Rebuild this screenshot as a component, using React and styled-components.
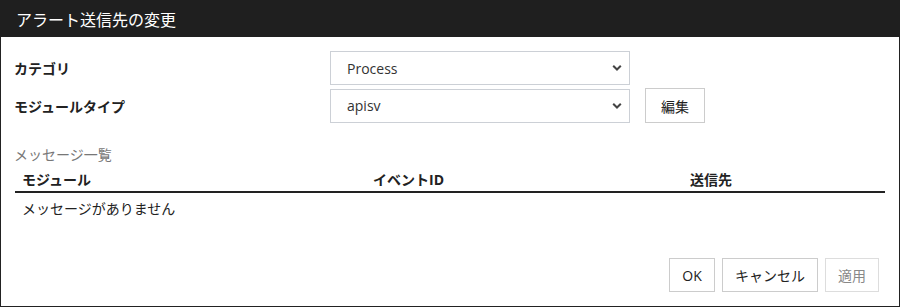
import React from "react";
import styled, { createGlobalStyle } from "styled-components";

const Global = createGlobalStyle`
  html, body { margin: 0; padding: 0; background: #fff; }
  body { font-family: "Open Sans", "Noto Sans CJK JP", sans-serif; }
  * { box-sizing: border-box; }
`;

const Dialog = styled.div`
  width: 900px;
  height: 307px;
  display: flex;
  flex-direction: column;
  border: 1px solid #222;
  border-top: none;
  background: #fff;
  color: #222;
`;

const Header = styled.div`
  height: 37px;
  margin: 0 -1px;
  background: #1f1f1f;
  color: #fff;
  font-size: 16px;
  display: flex;
  align-items: center;
  padding-left: 16px;
  flex-shrink: 0;
`;

const Body = styled.div`
  flex: 1;
  display: flex;
  flex-direction: column;
  padding: 14px 13px 0 13px;
`;

const Form = styled.div`
  display: grid;
  grid-template-columns: 316px 300px auto;
  row-gap: 3px;
  align-items: center;
`;

const Label = styled.div`
  font-size: 14px;
  font-weight: bold;
  color: #222;
`;

const SelectBox = styled.div`
  position: relative;
  height: 34px;
  border: 1px solid #ccd0d6;
  display: flex;
  align-items: center;
  padding-left: 16px;
  font-size: 14px;
  color: #333;
  background: #fff;
`;

const Chevron = styled.svg`
  position: absolute;
  right: 7px;
  top: 50%;
  transform: translateY(-50%);
`;

const Button = styled.button`
  height: 34px;
  min-width: ${(p) => p.$w || 46}px;
  padding: 0 12px;
  border: 1px solid ${(p) => (p.disabled ? "#ddd" : "#ccc")};
  background: #fff;
  color: ${(p) => (p.disabled ? "#888" : "#222")};
  font-family: inherit;
  font-size: 14px;
  display: inline-flex;
  align-items: center;
  justify-content: center;
`;

const EditButton = styled(Button)`
  margin-left: 15px;
  width: 60px;
  height: 35px;
  justify-self: start;
`;

const SectionTitle = styled.div`
  margin-top: 22px;
  font-size: 14px;
  color: #777;
  line-height: 20px;
`;

const Table = styled.div`
  width: 870px;
  margin-left: 1px;
  margin-top: 4px;
`;

const HeadRow = styled.div`
  display: grid;
  grid-template-columns: 351px 317px 1fr;
  border-bottom: 2px solid #222;
  height: 24px;
  align-items: center;
`;

const HeadCell = styled.div`
  font-size: 14px;
  font-weight: bold;
  padding-left: 7px;
  line-height: 20px;
`;

const EmptyRow = styled.div`
  font-size: 14px;
  padding-left: 7px;
  height: 30px;
  display: flex;
  align-items: center;
`;

const Footer = styled.div`
  margin-top: auto;
  display: flex;
  justify-content: flex-end;
  gap: 7px;
  padding: 0 7px 14px 0;
`;

function Select({ value }) {
  return (
    <SelectBox>
      {value}
      <Chevron width="10" height="7" viewBox="0 0 10 7">
        <path d="M1.2 1.2 L5 5 L8.8 1.2" stroke="#444" strokeWidth="2" fill="none" />
      </Chevron>
    </SelectBox>
  );
}

export default function App() {
  return (
    <>
      <Global />
      <Dialog>
        <Header>アラート送信先の変更</Header>
        <Body>
          <Form>
            <Label>カテゴリ</Label>
            <Select value="Process" />
            <div />
            <Label>モジュールタイプ</Label>
            <Select value="apisv" />
            <EditButton>編集</EditButton>
          </Form>
          <SectionTitle>メッセージ一覧</SectionTitle>
          <Table>
            <HeadRow>
              <HeadCell>モジュール</HeadCell>
              <HeadCell>イベントID</HeadCell>
              <HeadCell>送信先</HeadCell>
            </HeadRow>
            <EmptyRow>メッセージがありません</EmptyRow>
          </Table>
          <Footer>
            <Button $w={46}>OK</Button>
            <Button $w={95}>キャンセル</Button>
            <Button $w={52} disabled>適用</Button>
          </Footer>
        </Body>
      </Dialog>
    </>
  );
}
